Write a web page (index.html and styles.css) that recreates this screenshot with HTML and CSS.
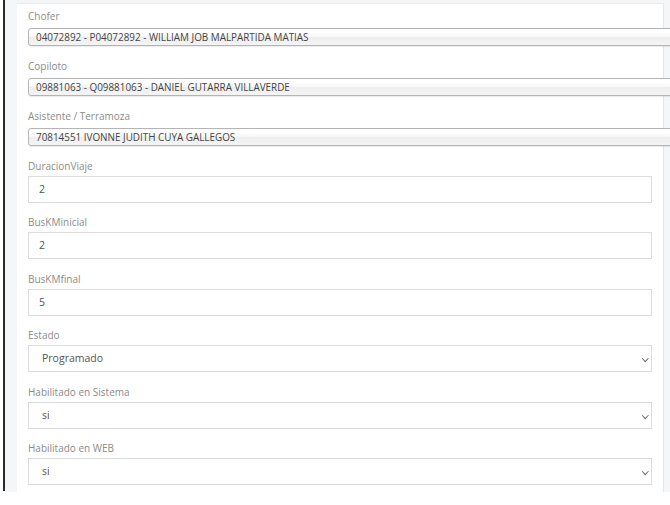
FILE: index.html
```html
<!DOCTYPE html>
<html lang="es">
<head>
  <meta charset="UTF-8">
  <title>Programacion</title>
  <link rel="stylesheet" href="styles.css">
</head>
<body>

  <div class="edge"></div>

  <div class="wrap">
    <!-- Formulario de viaje -->
    <div class="card">

      <div class="group">
        <label>Chofer</label>
        <div class="chosen">04072892 - P04072892 - WILLIAM JOB MALPARTIDA MATIAS</div>
      </div>

      <div class="group">
        <label>Copiloto</label>
        <div class="chosen">09881063 - Q09881063 - DANIEL GUTARRA VILLAVERDE</div>
      </div>

      <div class="group">
        <label>Asistente / Terramoza</label>
        <div class="chosen">70814551 IVONNE JUDITH CUYA GALLEGOS</div>
      </div>

      <div class="group">
        <label>DuracionViaje</label>
        <div class="field">2</div>
      </div>

      <div class="group">
        <label>BusKMinicial</label>
        <div class="field">2</div>
      </div>

      <div class="group">
        <label>BusKMfinal</label>
        <div class="field">5</div>
      </div>

      <div class="group">
        <label>Estado</label>
        <div class="field select">Programado</div>
      </div>

      <div class="group">
        <label>Habilitado en Sistema</label>
        <div class="field select">si</div>
      </div>

      <div class="group">
        <label>Habilitado en WEB</label>
        <div class="field select">si</div>
      </div>

    </div>
  </div>

</body>
</html>
```

FILE: styles.css
```css
* { margin: 0; padding: 0; box-sizing: border-box; font-family: 'Open Sans', sans-serif; }

body {
  background: #fff;
  display: flex;
  align-items: flex-start;
  overflow: hidden;
  height: 505px;
}

.edge {
  width: 5px;
  height: 491px;
  border-left: 3px solid #fff;
  background: #2b2b2b;
  flex: none;
}

.wrap {
  background: #f5f6f8;
  padding: 3px 6px 0 12px;
  width: 665px;
  flex: none;
}

.card {
  background: #fff;
  border-top: 1px solid #ececec;
  border-right: 1px solid #e6e6e6;
  width: 647px;
  height: 489px;
  padding: 5px 0 0 11px;
}

.group { margin-bottom: 13px; }

.group label {
  display: block;
  font-size: 10px;
  line-height: 14px;
  color: #8c8c8c;
  margin-bottom: 5px;
}

.chosen {
  width: 645px;
  height: 18px;
  line-height: 16px;
  padding-left: 7px;
  font-size: 9.9px;
  color: #444;
  border: 1px solid #b4b4b4;
  border-radius: 3px;
  background: linear-gradient(#fff 20%, #f6f6f6 50%, #eee 52%, #f4f4f4 100%);
  box-shadow: 0 1px 1px rgba(0,0,0,0.08);
  white-space: nowrap;
}

.field {
  width: 624px;
  height: 27px;
  line-height: 25px;
  padding-left: 10px;
  font-size: 10.5px;
  color: #555;
  border: 1px solid #dcdcdc;
  background: #fff;
  position: relative;
}

.group:has(.field) { margin-bottom: 12.4px; }
.group:has(.field) label { margin-bottom: 3px; }

.select { padding-left: 13px; }

.select::after {
  content: "";
  position: absolute;
  right: 4px;
  top: 10px;
  width: 3.5px;
  height: 3.5px;
  border-right: 1.3px solid #666;
  border-bottom: 1.3px solid #666;
  transform: rotate(45deg);
}
```
